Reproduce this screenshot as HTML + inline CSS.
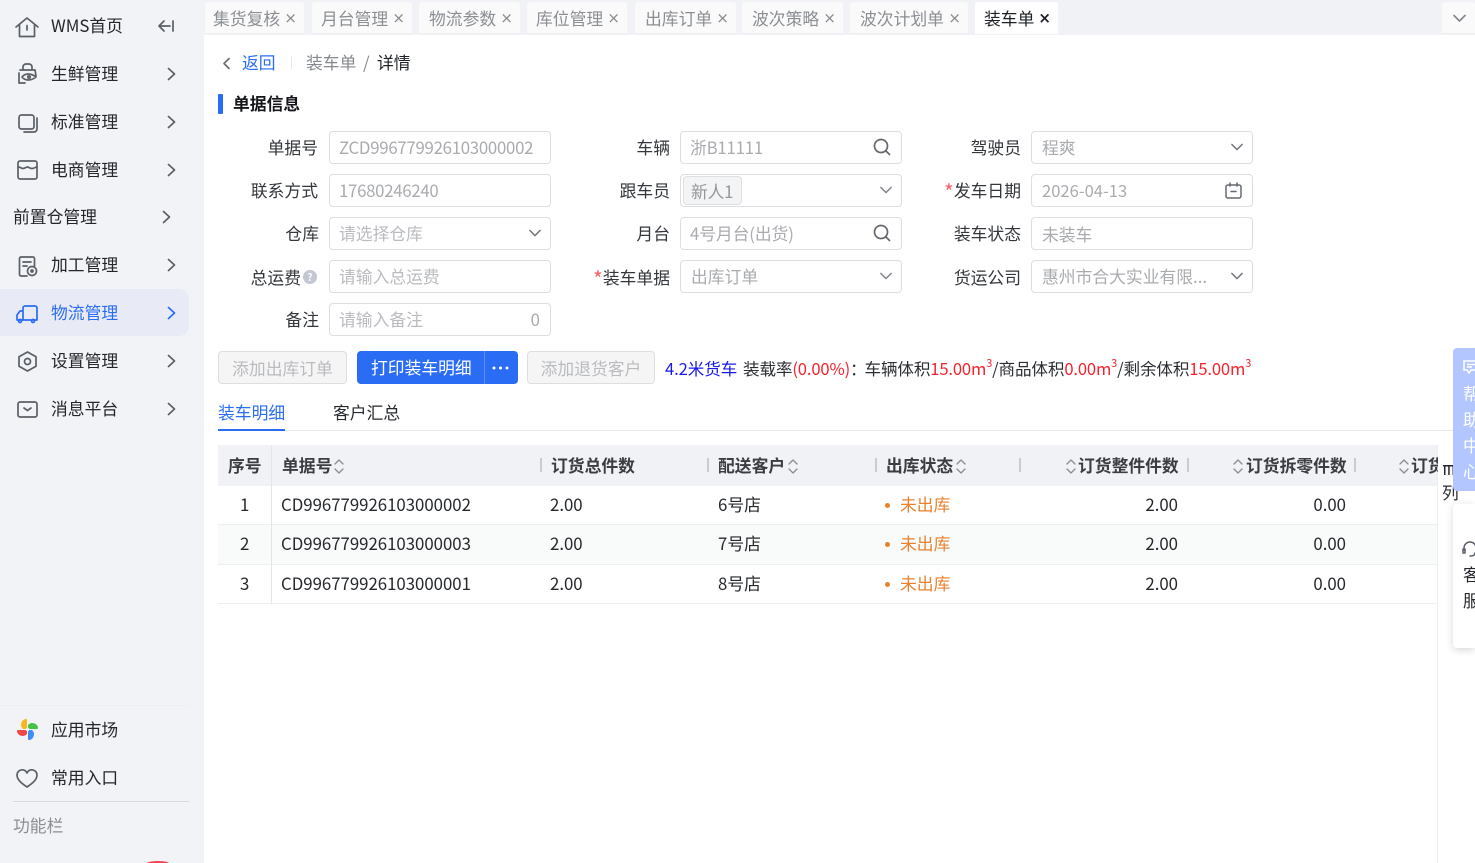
<!DOCTYPE html>
<html lang="zh"><head><meta charset="utf-8"><title>装车单</title>
<style>
*{box-sizing:border-box}
html,body{margin:0;padding:0;width:1475px;height:863px;overflow:hidden;background:#fff}
body{position:relative;font-family:"Noto Sans CJK SC","Liberation Sans",sans-serif;font-size:16.8px;color:#2b2e33}
.a{position:absolute;white-space:nowrap}
.side{position:absolute;left:0;top:0;width:204px;height:863px;background:#f1f3f6}
.m{position:absolute;left:51px;height:24px;line-height:24px;white-space:nowrap;color:#23262b}
svg{position:absolute;overflow:visible}
.ic{fill:none;stroke:#5b5f67;stroke-width:1.7;stroke-linecap:round;stroke-linejoin:round}
.tab{position:absolute;top:2px;height:32px;background:#fafafa;border-bottom:1px solid #eeeff1;border-radius:3px 3px 0 0;line-height:32px;color:#8b8e93;padding-left:9px;white-space:nowrap}
.tab i{position:absolute;right:7px;top:0;font-style:normal;font-size:15px;color:#85888d;font-family:"DejaVu Sans",sans-serif}
.l{position:absolute;text-align:right;height:33px;line-height:33px;white-space:nowrap;color:#33363b}
.in{position:absolute;width:222px;height:33px;border:1px solid #dcdee2;border-radius:4px;line-height:31px;padding-left:9px;color:#a9abaf;white-space:nowrap;background:#fff}
.pl{color:#b9bbbf}
.ch{position:absolute;right:9px;top:11px;width:12px;height:8px}
.btn{position:absolute;top:351px;height:33px;border-radius:4px;line-height:33px;text-align:center;white-space:nowrap}
.dis{background:#f5f5f5;border:1px solid #dcdee2;color:#b9bbbf}
.th{position:absolute;top:445px;height:41px;line-height:41px;font-weight:700;font-size:16.8px;color:#3a3d42;white-space:nowrap}
.td{position:absolute;line-height:39px;height:39px;white-space:nowrap;color:#25282c}
.sp{position:absolute;width:1.5px;height:14px;top:458px;background:#c8cbd0}
.red{color:#f5222d}
.st{color:#f5606a;font-size:21px;line-height:0;position:relative;top:3px}
sup{font-size:11px;line-height:0;position:relative;top:-1px;vertical-align:super}
</style></head><body>

<div class="side"></div>
<div class="a" style="left:0;top:705px;width:189px;height:1px;background:#eceef1"></div>
<div class="a" style="left:0;top:289px;width:189px;height:47px;background:#e8ebf5;border-radius:0 10px 10px 0"></div>

<svg class="ic" style="left:15px;top:16px" width="24" height="22" viewBox="0 0 24 22"><path d="M1 11 12 2l11 9M4.500 9v11.500h15V9M12 9.500v4.500"/></svg>
<div class="m" style="top:13px">WMS首页</div>
<svg class="ic" style="left:157px;top:19px" width="18" height="14" viewBox="0 0 18 14"><path d="M7 2 2 7l5 5M2 7h11M16 2v10"/></svg>

<svg class="ic" style="left:17px;top:63px" width="21" height="22" viewBox="0 0 21 22"><path d="M6 7V4a3 3 0 0 1 3-3h3a3 3 0 0 1 3 3v3M3 7h15l1 6M2 10v10h6M5 14c3-4 9-4 14 0-5 4-11 4-14 0z"/><circle cx="12" cy="14" r="1.200"/></svg>
<div class="m" style="top:61px">生鲜管理</div>

<svg class="ic" style="left:18px;top:113px" width="20" height="20" viewBox="0 0 20 20"><rect x="1" y="2" width="15" height="14" rx="2.500"/><path d="M19 5v11a3 3 0 0 1-3 3H6"/></svg>
<div class="m" style="top:109px">标准管理</div>

<svg class="ic" style="left:17px;top:160px" width="21" height="20" viewBox="0 0 21 20"><rect x="1" y="1" width="19" height="18" rx="2"/><path d="M1 7c3 0 3 1.500 5 1.500S9 7 10.500 7s2 1.500 4.500 1.500S18 7 20 7"/></svg>
<div class="m" style="top:157px">电商管理</div>

<div class="m" style="left:13px;top:204px">前置仓管理</div>

<svg class="ic" style="left:18px;top:256px" width="20" height="21" viewBox="0 0 20 21"><path d="M9 20H3a1.500 1.500 0 0 1-1.500-1.500v-16A1.500 1.500 0 0 1 3 1h12a1.500 1.500 0 0 1 1.500 1.500V10M5 6h8M5 10h4"/><circle cx="14" cy="15" r="4.500"/><circle cx="14" cy="15" r="1"/></svg>
<div class="m" style="top:252px">加工管理</div>

<svg class="ic" style="left:16px;top:304px;stroke:#2a6df4" width="22" height="20" viewBox="0 0 22 20"><path d="M7 16V4a2 2 0 0 1 2-2h10a2 2 0 0 1 2 2v12H7M7 7H4l-3 4v5h6"/><circle cx="4" cy="17" r="1.500"/><circle cx="17" cy="17" r="1.500"/></svg>
<div class="m" style="top:300px;color:#2a6df4">物流管理</div>

<svg class="ic" style="left:18px;top:351px" width="19" height="21" viewBox="0 0 19 21"><path d="M9.500 1 18 5.800v9.400L9.500 20 1 15.200V5.800z"/><circle cx="9.500" cy="10.500" r="3"/></svg>
<div class="m" style="top:348px">设置管理</div>

<svg class="ic" style="left:17px;top:401px" width="21" height="17" viewBox="0 0 21 17"><rect x="1" y="1" width="19" height="15" rx="2"/><path d="M7 7l3.500 2.500L14 7"/></svg>
<div class="m" style="top:396px">消息平台</div>

<svg class="ic" style="left:167px;top:67px" width="9" height="14" viewBox="0 0 9 14"><path d="m1.500 1.500 6 5.500-6 5.500"/></svg>
<svg class="ic" style="left:167px;top:115px" width="9" height="14" viewBox="0 0 9 14"><path d="m1.500 1.500 6 5.500-6 5.500"/></svg>
<svg class="ic" style="left:167px;top:163px" width="9" height="14" viewBox="0 0 9 14"><path d="m1.500 1.500 6 5.500-6 5.500"/></svg>
<svg class="ic" style="left:162px;top:210px" width="9" height="14" viewBox="0 0 9 14"><path d="m1.500 1.500 6 5.500-6 5.500"/></svg>
<svg class="ic" style="left:167px;top:258px" width="9" height="14" viewBox="0 0 9 14"><path d="m1.500 1.500 6 5.500-6 5.500"/></svg>
<svg class="ic" style="left:167px;top:306px;stroke:#2a6df4" width="9" height="14" viewBox="0 0 9 14"><path d="m1.500 1.500 6 5.500-6 5.500"/></svg>
<svg class="ic" style="left:167px;top:354px" width="9" height="14" viewBox="0 0 9 14"><path d="m1.500 1.500 6 5.500-6 5.500"/></svg>
<svg class="ic" style="left:167px;top:402px" width="9" height="14" viewBox="0 0 9 14"><path d="m1.500 1.500 6 5.500-6 5.500"/></svg>

<svg style="left:17px;top:719px" width="21" height="21" viewBox="0 0 21 21">
<path fill="#f5b91e" d="M10 10V1Q10 0 9 0C6 0 4 3 4 6Q4 8 6 10z"/>
<path fill="#46c24a" d="M10 10V1Q10 0 9 0C6 0 4 3 4 6Q4 8 6 10z" transform="rotate(90 10.500 10.500)"/>
<path fill="#3e8ef7" d="M10 10V1Q10 0 9 0C6 0 4 3 4 6Q4 8 6 10z" transform="rotate(180 10.500 10.500)"/>
<path fill="#f04848" d="M10 10V1Q10 0 9 0C6 0 4 3 4 6Q4 8 6 10z" transform="rotate(270 10.500 10.500)"/>
<circle cx="10.500" cy="10.500" r="1.800" fill="#f1f3f6"/></svg>
<div class="m" style="top:717px">应用市场</div>
<svg class="ic" style="left:16px;top:768px" width="22" height="20" viewBox="0 0 22 20"><path d="M11 19C5 15 1 11.500 1 7a5.200 5.200 0 0 1 10-2 5.200 5.200 0 0 1 10 2c0 4.500-4 8-10 12z"/></svg>
<div class="m" style="top:765px">常用入口</div>
<div class="a" style="left:13px;top:801px;width:176px;height:1px;background:#d6d8dc"></div>
<div class="m" style="left:13px;top:813px;color:#8b8e93">功能栏</div>
<div class="a" style="left:146px;top:861px;width:24px;height:6px;border-radius:50%;background:#f0444b"></div>

<div class="a" style="left:204px;top:0;width:1271px;height:35px;background:#f1f2f5"></div>
<div class="tab" style="left:205px;width:99px;padding-left:8px">集货复核<i>×</i></div>
<div class="tab" style="left:312px;width:100px">月台管理<i>×</i></div>
<div class="tab" style="left:419px;width:101px;padding-left:10px">物流参数<i>×</i></div>
<div class="tab" style="left:527px;width:100px">库位管理<i>×</i></div>
<div class="tab" style="left:635px;width:101px;padding-left:10px">出库订单<i>×</i></div>
<div class="tab" style="left:742px;width:101px;padding-left:10px">波次策略<i>×</i></div>
<div class="tab" style="left:850px;width:118px;padding-left:10px">波次计划单<i>×</i></div>
<div class="tab" style="left:975px;width:83px;background:#fff;border:0;color:#1d2025;padding-left:9px">装车单<i style="color:#1d2025;font-weight:700">×</i></div>
<div class="tab" style="left:1442px;width:33px;padding:0"></div>
<svg class="ic" style="left:1453px;top:14px;stroke:#85888d" width="13" height="9" viewBox="0 0 13 9"><path d="m1 1.500 5.500 5.500L12 1.500"/></svg>

<svg class="ic" style="left:222px;top:57px;stroke:#6c6f75" width="9" height="13" viewBox="0 0 9 13"><path d="M7 1.500 2 6.500l5 5"/></svg>
<div class="a" style="left:242px;top:50px;line-height:24px;color:#2a6df4">返回</div>
<div class="a" style="left:291px;top:56px;width:1px;height:13px;background:#e6e7ea"></div>
<div class="a" style="left:306px;top:50px;line-height:24px;color:#85888d">装车单</div>
<div class="a" style="left:363px;top:50px;line-height:24px;color:#85888d">/</div>
<div class="a" style="left:377px;top:50px;line-height:24px;color:#1f2226">详情</div>

<div class="a" style="left:218px;top:94px;width:5px;height:20px;background:#2a6df4;border-radius:1px"></div>
<div class="a" style="left:233px;top:91px;line-height:24px;font-weight:700;color:#14161a">单据信息</div>

<div class="l" style="right:1157px;top:131px">单据号</div>
<div class="in" style="left:329px;top:131px;letter-spacing:-.26px">ZCD996779926103000002</div>
<div class="l" style="right:805px;top:131px">车辆</div>
<div class="in" style="left:680px;top:131px;letter-spacing:-.2px">浙B11111<svg class="ic" style="right:10px;top:6px;stroke:#65686e" width="18" height="18" viewBox="0 0 18 18"><circle cx="8" cy="8" r="6.500"/><path d="m13 13 3.500 3.500"/></svg></div>
<div class="l" style="right:454px;top:131px">驾驶员</div>
<div class="in" style="left:1031px;top:131px;padding-left:10px;line-height:30px">程爽<svg class="ic ch" style="stroke:#75787e" viewBox="0 0 14 9"><path d="m1 1.500 6 6 6-6"/></svg></div>

<div class="l" style="right:1157px;top:174px">联系方式</div>
<div class="in" style="left:329px;top:174px;letter-spacing:-.27px">17680246240</div>
<div class="l" style="right:805px;top:174px">跟车员</div>
<div class="in" style="left:680px;top:174px"><span class="a" style="left:2px;top:1px;width:59px;height:29px;line-height:28px;background:#f3f4f5;border:1px solid #dfe0e3;border-radius:4px;padding-left:7px;color:#94979b;letter-spacing:-.2px">新人1</span><svg class="ic ch" style="stroke:#85888d" viewBox="0 0 14 9"><path d="m1 1.500 6 6 6-6"/></svg></div>
<div class="l" style="right:454px;top:174px"><span class="st">*</span>发车日期</div>
<div class="in" style="left:1031px;top:174px;padding-left:10px;font-size:16.6px">2026-04-13<svg class="ic" style="right:10px;top:7px;stroke:#65686e;stroke-width:1.500" width="17" height="17" viewBox="0 0 17 17"><rect x="1" y="3" width="15" height="13" rx="2"/><path d="M5 1v3M12 1v3M6 9.500h5"/></svg></div>

<div class="l" style="right:1156px;top:217px">仓库</div>
<div class="in pl" style="left:329px;top:217px">请选择仓库<svg class="ic ch" style="stroke:#75787e" viewBox="0 0 14 9"><path d="m1 1.500 6 6 6-6"/></svg></div>
<div class="l" style="right:805px;top:217px">月台</div>
<div class="in" style="left:680px;top:217px;letter-spacing:-.1px">4号月台(出货)<svg class="ic" style="right:10px;top:6px;stroke:#65686e" width="18" height="18" viewBox="0 0 18 18"><circle cx="8" cy="8" r="6.500"/><path d="m13 13 3.500 3.500"/></svg></div>
<div class="l" style="right:454px;top:217px">装车状态</div>
<div class="in" style="left:1031px;top:217px;padding-left:10px;line-height:32px">未装车</div>

<div class="l" style="right:1174px;top:261px">总运费</div>
<div class="a" style="left:303px;top:270px;width:14px;height:14px;border-radius:50%;background:#c3c7d2;color:#fff;font-size:10px;line-height:14px;text-align:center;font-weight:700">?</div>
<div class="in pl" style="left:329px;top:260px">请输入总运费</div>
<div class="l" style="right:805px;top:261px"><span class="st">*</span>装车单据</div>
<div class="in" style="left:680px;top:260px;padding-left:10px;line-height:30px">出库订单<svg class="ic ch" style="stroke:#85888d" viewBox="0 0 14 9"><path d="m1 1.500 6 6 6-6"/></svg></div>
<div class="l" style="right:454px;top:261px">货运公司</div>
<div class="in" style="left:1031px;top:260px;padding-left:10px;line-height:30px">惠州市合大实业有限...<svg class="ic ch" style="stroke:#75787e" viewBox="0 0 14 9"><path d="m1 1.500 6 6 6-6"/></svg></div>

<div class="l" style="right:1156px;top:303px">备注</div>
<div class="in pl" style="left:329px;top:303px">请输入备注<span class="a" style="right:10px;top:0;color:#a9abaf">0</span></div>

<div class="btn dis" style="left:218px;width:129px">添加出库订单</div>
<div class="btn" style="left:357px;width:161px;background:#2a6df4;color:#fff;text-align:left;padding-left:14px">打印装车明细<span class="a" style="left:127px;top:0;width:1px;height:33px;background:#5d8ff7"></span><svg style="left:135px;top:15px" width="18" height="4" viewBox="0 0 18 4"><circle cx="2" cy="2" r="1.500" fill="#fff"/><circle cx="8.500" cy="2" r="1.500" fill="#fff"/><circle cx="15" cy="2" r="1.500" fill="#fff"/></svg></div>
<div class="btn dis" style="left:527px;width:128px">添加退货客户</div>
<div class="a" style="left:665px;top:356px;line-height:24px;font-size:16.6px;letter-spacing:-.1px"><span style="color:#1a1ae8">4.2米货车</span></div>
<div class="a" style="left:743px;top:356px;line-height:24px;font-size:16.6px;letter-spacing:-.15px">装载率<span class="red">(0.00%)</span><span style="margin-right:-2px">：</span>车辆体积<span class="red">15.00m<sup>3</sup></span>/商品体积<span class="red">0.00m<sup>3</sup></span>/剩余体积<span class="red">15.00m<sup>3</sup></span></div>

<div class="a" style="left:218px;top:400px;line-height:24px;color:#2a6df4">装车明细</div>
<div class="a" style="left:333px;top:400px;line-height:24px;color:#25282c">客户汇总</div>
<div class="a" style="left:218px;top:430px;width:1257px;height:1px;background:#e6e7ea"></div>
<div class="a" style="left:218px;top:429px;width:67px;height:2px;background:#2a6df4"></div>

<div class="a" style="left:218px;top:445px;width:1220px;height:41px;background:#f1f2f5"></div>
<div class="a" style="left:218px;top:525px;width:1220px;height:39px;background:#f9fafa"></div>
<div class="a" style="left:218px;top:524px;width:1220px;height:1px;background:#eeeff1"></div>
<div class="a" style="left:218px;top:564px;width:1220px;height:1px;background:#eeeff1"></div>
<div class="a" style="left:218px;top:603px;width:1220px;height:1px;background:#eeeff1"></div>
<div class="a" style="left:271px;top:445px;width:1px;height:159px;background:#e3e5e9"></div>
<div class="a" style="left:1437px;top:445px;width:1px;height:418px;background:#eceef0"></div>

<div class="th" style="left:228px">序号</div>
<div class="th" style="left:282px">单据号</div>
<div class="th" style="left:551px">订货总件数</div>
<div class="th" style="left:718px">配送客户</div>
<div class="th" style="left:886px">出库状态</div>
<div class="th" style="left:1078px">订货整件件数</div>
<div class="th" style="left:1246px">订货拆零件数</div>
<div class="th" style="left:1411px;width:27px;overflow:hidden">订货</div>

<svg class="ic" style="left:334px;top:459px;stroke:#8a8d93;stroke-width:1.300" width="10" height="15" viewBox="0 0 10 15"><path d="m1 5 4-4 4 4M1 10l4 4 4-4"/></svg>
<svg class="ic" style="left:788px;top:459px;stroke:#8a8d93;stroke-width:1.300" width="10" height="15" viewBox="0 0 10 15"><path d="m1 5 4-4 4 4M1 10l4 4 4-4"/></svg>
<svg class="ic" style="left:956px;top:459px;stroke:#8a8d93;stroke-width:1.300" width="10" height="15" viewBox="0 0 10 15"><path d="m1 5 4-4 4 4M1 10l4 4 4-4"/></svg>
<svg class="ic" style="left:1066px;top:459px;stroke:#8a8d93;stroke-width:1.300" width="10" height="15" viewBox="0 0 10 15"><path d="m1 5 4-4 4 4M1 10l4 4 4-4"/></svg>
<svg class="ic" style="left:1233px;top:459px;stroke:#8a8d93;stroke-width:1.300" width="10" height="15" viewBox="0 0 10 15"><path d="m1 5 4-4 4 4M1 10l4 4 4-4"/></svg>
<svg class="ic" style="left:1399px;top:459px;stroke:#8a8d93;stroke-width:1.300" width="10" height="15" viewBox="0 0 10 15"><path d="m1 5 4-4 4 4M1 10l4 4 4-4"/></svg>

<div class="sp" style="left:540px"></div>
<div class="sp" style="left:707px"></div>
<div class="sp" style="left:875px"></div>
<div class="sp" style="left:1019px"></div>
<div class="sp" style="left:1187px"></div>
<div class="sp" style="left:1354px"></div>

<div class="td" style="left:240px;top:485px">1</div>
<div class="td" style="left:281px;top:485px">CD996779926103000002</div>
<div class="td" style="left:550px;top:485px">2.00</div>
<div class="td" style="left:718px;top:485px">6号店</div>
<div class="a" style="left:885px;top:503px;width:5px;height:5px;border-radius:50%;background:#e8822f"></div>
<div class="td" style="left:900px;top:485px;color:#e8822f">未出库</div>
<div class="td" style="right:297px;top:485px">2.00</div>
<div class="td" style="right:129px;top:485px">0.00</div>

<div class="td" style="left:240px;top:524px">2</div>
<div class="td" style="left:281px;top:524px">CD996779926103000003</div>
<div class="td" style="left:550px;top:524px">2.00</div>
<div class="td" style="left:718px;top:524px">7号店</div>
<div class="a" style="left:885px;top:542px;width:5px;height:5px;border-radius:50%;background:#e8822f"></div>
<div class="td" style="left:900px;top:524px;color:#e8822f">未出库</div>
<div class="td" style="right:297px;top:524px">2.00</div>
<div class="td" style="right:129px;top:524px">0.00</div>

<div class="td" style="left:240px;top:564px">3</div>
<div class="td" style="left:281px;top:564px">CD996779926103000001</div>
<div class="td" style="left:550px;top:564px">2.00</div>
<div class="td" style="left:718px;top:564px">8号店</div>
<div class="a" style="left:885px;top:582px;width:5px;height:5px;border-radius:50%;background:#e8822f"></div>
<div class="td" style="left:900px;top:564px;color:#e8822f">未出库</div>
<div class="td" style="right:297px;top:564px">2.00</div>
<div class="td" style="right:129px;top:564px">0.00</div>

<svg style="left:1443px;top:465px" width="12" height="10" viewBox="0 0 12 10"><path fill="#25282c" d="M0 0h12v1.500H0zM1 1.500h1.500V10H1zM5.200 1.500h1.500V10H5.200zM9.500 1.500H11V10H9.500z"/></svg>
<div class="a" style="left:1442px;top:480px;line-height:24px">列</div>

<div class="a" style="left:1453px;top:348px;width:22px;height:143px;background:#b3c6ff;border-radius:4px 0 0 4px;overflow:hidden;color:#fff">
  <svg style="left:10px;top:12px;stroke:#fff;fill:none;stroke-width:1.500" width="14" height="14" viewBox="0 0 14 14"><path d="M1 1h13v9H8l-2 3-2-3H1zM4 4.500h8M4 7h5"/></svg>
  <span class="a" style="left:10px;top:32px;line-height:26px;white-space:normal;width:18px">帮<br>助<br>中<br>心</span>
</div>
<div class="a" style="left:1453px;top:504px;width:22px;height:144px;background:#fff;border-radius:4px 0 0 4px;box-shadow:0 2px 8px rgba(0,0,0,.16);overflow:hidden">
  <svg class="ic" style="left:9px;top:36px;stroke-width:1.500" width="16" height="18" viewBox="0 0 16 18"><path d="M2 10V8a6 6 0 0 1 12 0v2M1 9h2v4H1zM8 16c3 0 5-1 5-3"/></svg>
  <span class="a" style="left:10px;top:57px;line-height:26px;white-space:normal;width:18px;color:#25282c">客<br>服</span>
</div>

</body></html>
